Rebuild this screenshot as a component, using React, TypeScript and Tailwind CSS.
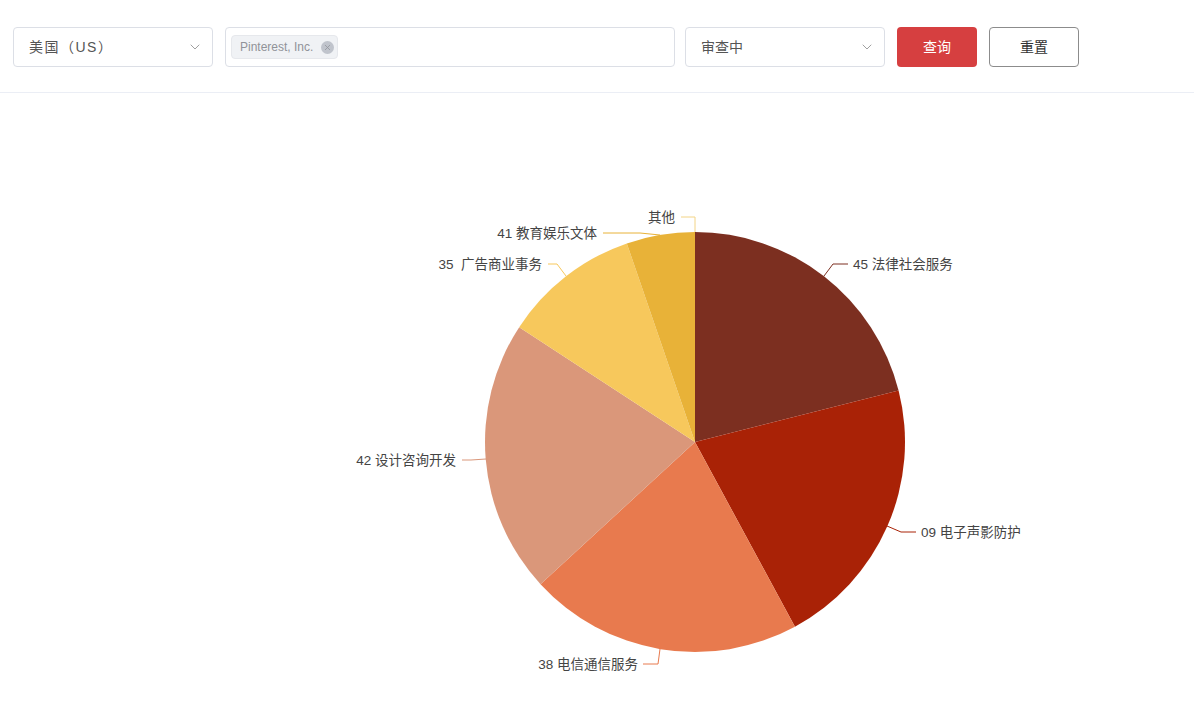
import React from "react";
import { ChevronDown, X } from "lucide-react";

const CX = 695;
const CY = 442;
const R = 210;

const slices = [
  { name: "45 法律社会服务", value: 20, color: "#7c2f20" },
  { name: "09 电子声影防护", value: 20, color: "#a92206" },
  { name: "38 电信通信服务", value: 20, color: "#e87a4e" },
  { name: "42 设计咨询开发", value: 20, color: "#da977a" },
  { name: "35  广告商业事务", value: 10, color: "#f7c85c" },
  { name: "41 教育娱乐文体", value: 5, color: "#e8b238" },
  { name: "其他", value: 0, color: "#f3d486" },
];

// label lines + text anchor per slice (page coords)
const labels = [
  { line: "824,276 833,264 848,264", x: 853, y: 264, anchor: "start" },
  { line: "887,526 901,532 916,532", x: 921, y: 532, anchor: "start" },
  { line: "660,649 658,664 643,664", x: 638, y: 664, anchor: "end" },
  { line: "486,459 471,460 462,460", x: 456, y: 460, anchor: "end" },
  { line: "566,276 557,264 548,264", x: 542, y: 264, anchor: "end" },
  { line: "660,235 640,233 603,233", x: 597, y: 233, anchor: "end" },
  { line: "695,232 695,217 681,217", x: 675, y: 217, anchor: "end" },
];

const pt = (deg: number, r: number) => {
  const a = (deg * Math.PI) / 180;
  return [CX + r * Math.sin(a), CY - r * Math.cos(a)];
};

const PieChart = () => {
  const total = slices.reduce((s, d) => s + d.value, 0);
  let start = 0;
  return (
    <svg width="1194" height="626" viewBox="0 93 1194 626" className="block">
      {slices.map((s, i) => {
        const sweep = (s.value / total) * 360;
        const end = start + sweep;
        const [x1, y1] = pt(start, R);
        const [x2, y2] = pt(end, R);
        const large = sweep > 180 ? 1 : 0;
        start = end;
        if (sweep <= 0) return null;
        return (
          <path
            key={i}
            d={`M${CX},${CY} L${x1},${y1} A${R},${R} 0 ${large} 1 ${x2},${y2} Z`}
            fill={s.color}
          />
        );
      })}
      {labels.map((l, i) => (
        <g key={i}>
          <polyline points={l.line} fill="none" stroke={slices[i].color} strokeWidth="1" />
          <text
            x={l.x}
            y={l.y}
            textAnchor={l.anchor as "start" | "end"}
            dominantBaseline="central"
            fill="#444"
            fontSize="13.5"
            className="whitespace-pre"
            style={{ fontFamily: '"Liberation Sans", "Noto Sans CJK SC", sans-serif' }}
          >
            {slices[i].name}
          </text>
        </g>
      ))}
    </svg>
  );
};

const Select = ({ text, spaced }: { text: string; spaced?: boolean }) => (
  <div className="w-[200px] h-[40px] shrink-0 border border-[#dcdfe6] rounded-[4px] bg-white flex items-center justify-between pl-[15px] pr-[9px]">
    <span className={spaced ? "text-[14px] text-[#555] tracking-[1.5px]" : "text-[14px] text-[#555]"}>{text}</span>
    <ChevronDown size={16} strokeWidth={1.2} className="text-[#888]" />
  </div>
);

export default function App() {
  return (
    <div
      className="w-[1194px] h-[719px] bg-white overflow-hidden"
      style={{ fontFamily: '"Liberation Sans", "Noto Sans CJK SC", sans-serif' }}
    >
      <div className="flex items-center pl-[13px] pt-[27px] pb-[25px] border-b border-[#ebeef5]">
        <Select text="美国（US）" spaced />
        <div className="ml-[12px] w-[450px] h-[40px] shrink-0 border border-[#dcdfe6] rounded-[4px] flex items-center pl-[5px]">
          <div className="h-[24px] flex items-center gap-[8px] pl-[8px] pr-[3px] bg-[#f0f2f5] border border-[#e6e8ec] rounded-[4px]">
            <span className="text-[12px] text-[#909399]">Pinterest, Inc.</span>
            <span className="w-[13px] h-[13px] rounded-full bg-[#c0c4cc] flex items-center justify-center">
              <X size={9} strokeWidth={2} className="text-[#909399]" />
            </span>
          </div>
        </div>
        <div className="ml-[10px]">
          <Select text="审查中" />
        </div>
        <button className="ml-[12px] w-[80px] h-[40px] rounded-[4px] bg-[#d63f40] text-white text-[14px]">查询</button>
        <button className="ml-[12px] w-[90px] h-[40px] rounded-[4px] border border-[#8c8c8c] bg-white text-[#333] text-[14px]">重置</button>
      </div>
      <PieChart />
    </div>
  );
}
